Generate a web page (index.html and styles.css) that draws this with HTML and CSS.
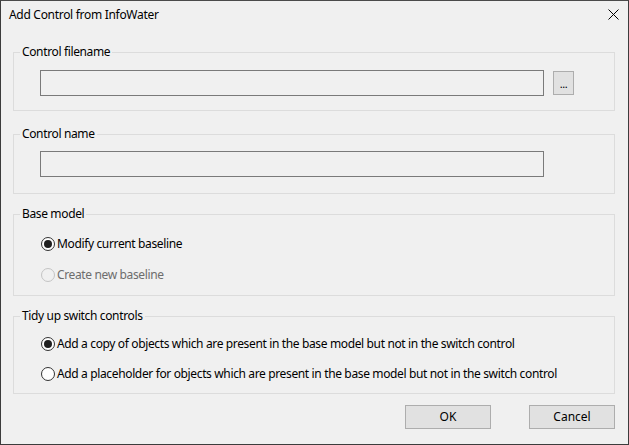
FILE: index.html
```html
<!DOCTYPE html>
<html lang="en">
<head>
<meta charset="utf-8">
<title>Add Control from InfoWater</title>
<link rel="stylesheet" href="styles.css">
</head>
<body>
<div class="window">
  <div class="titlebar">
    <span class="title">Add Control from InfoWater</span>
    <svg class="close" width="11" height="11" viewBox="0 0 11 11" aria-label="Close">
      <path d="M0.5 0.5 L10.5 10.5 M10.5 0.5 L0.5 10.5" stroke="#000" stroke-width="1" fill="none"/>
    </svg>
  </div>
  <div class="content">
    <fieldset class="group group-file">
      <legend>Control filename</legend>
      <div class="group-body field-row">
        <div class="textbox"></div>
        <button class="browse" type="button">...</button>
      </div>
    </fieldset>
    <fieldset class="group group-name">
      <legend>Control name</legend>
      <div class="group-body field-row">
        <div class="textbox"></div>
      </div>
    </fieldset>
    <fieldset class="group group-base">
      <legend>Base model</legend>
      <div class="group-body radio-list">
        <div class="radio-row"><span class="radio checked"></span><span class="radio-label">Modify current baseline</span></div>
        <div class="radio-row disabled"><span class="radio"></span><span class="radio-label">Create new baseline</span></div>
      </div>
    </fieldset>
    <fieldset class="group group-tidy">
      <legend>Tidy up switch controls</legend>
      <div class="group-body radio-list">
        <div class="radio-row"><span class="radio checked"></span><span class="radio-label">Add a copy of objects which are present in the base model but not in the switch control</span></div>
        <div class="radio-row"><span class="radio"></span><span class="radio-label">Add a placeholder for objects which are present in the base model but not in the switch control</span></div>
      </div>
    </fieldset>
    <div class="buttons">
      <button class="btn" type="button">OK</button>
      <button class="btn" type="button">Cancel</button>
    </div>
  </div>
</div>
</body>
</html>
```

FILE: styles.css
```css
* { box-sizing: border-box; }

html, body {
  margin: 0;
  padding: 0;
  background: #2e2e2e;
}

body {
  font-family: "Noto Sans", "Open Sans", sans-serif;
  font-size: 12px;
  letter-spacing: -0.36px;
  color: #000;
}

.window {
  width: 629px;
  height: 445px;
  background: #f0f0f0;
  border: 1px solid #3c3c3c;
  border-top-color: #4a4a4a;
  display: flex;
  flex-direction: column;
}

.titlebar {
  height: 28px;
  display: flex;
  align-items: center;
  justify-content: space-between;
  padding: 0 9px 0 8px;
  flex: none;
}

.title {
  line-height: 16px;
  letter-spacing: -0.3px;
}

.close {
  display: block;
  margin-top: -1px;
}

.content {
  padding: 15px 13px 0 12px;
  display: flex;
  flex-direction: column;
}

.group {
  margin: 0;
  padding: 0;
  min-width: 0;
  border: 1px solid #dcdcdc;
}

.group legend {
  margin-left: 6px;
  padding: 0 2px;
  line-height: 16px;
}

.group-file .group-body { padding: 10px 0 14px 26px; }
.group-name { margin-top: 15px; }
.group-name .group-body { padding: 9px 0 16px 26px; }
.group-base { margin-top: 12px; }
.group-base .group-body { padding: 12px 0 10px 27px; }
.group-tidy { margin-top: 12px; }
.group-tidy .group-body { padding: 10px 0 9px 27px; }

.field-row {
  display: flex;
  align-items: center;
  gap: 9px;
}

.textbox {
  width: 504px;
  height: 26px;
  border: 1px solid #7a7a7a;
  background: #f0f0f0;
}

.browse {
  width: 21px;
  height: 24px;
  padding: 0;
  border: 1px solid #adadad;
  background: #e1e1e1;
  font: inherit;
  font-size: 11px;
  letter-spacing: -0.5px;
  line-height: 24px;
  color: #000;
}

.radio-list {
  display: flex;
  flex-direction: column;
}

.group-base .radio-list { gap: 11px; }
.group-tidy .radio-list { gap: 10px; }

.radio-row {
  height: 20px;
  display: flex;
  align-items: center;
  gap: 2px;
}

.radio {
  width: 14px;
  height: 14px;
  border: 1px solid #333;
  border-radius: 50%;
  background: #fff;
  display: flex;
  align-items: center;
  justify-content: center;
  flex: none;
}

.radio.checked::after {
  content: "";
  width: 8px;
  height: 8px;
  border-radius: 50%;
  background: #1f1f1f;
}

.radio-label {
  line-height: 16px;
  white-space: nowrap;
}

.radio-row.disabled .radio {
  border-color: #c4c4c4;
  background: #f0f0f0;
}

.radio-row.disabled .radio-label {
  color: #6d6d6d;
}

.buttons {
  margin-top: 11px;
  display: flex;
  justify-content: flex-end;
  gap: 38px;
}

.btn {
  width: 86px;
  height: 24px;
  padding: 0;
  border: 1px solid #adadad;
  background: #e1e1e1;
  font: inherit;
  color: #000;
  line-height: 22px;
}
```
